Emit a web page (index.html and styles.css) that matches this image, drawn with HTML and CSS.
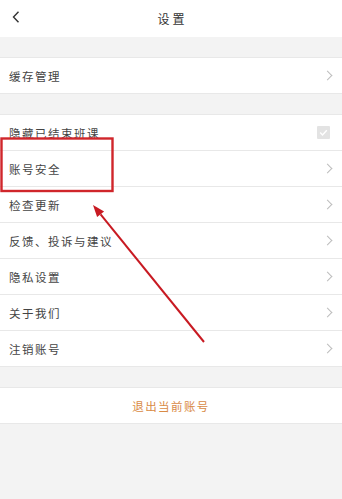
FILE: index.html
```html
<!DOCTYPE html>
<html>
<head>
    <meta charset="utf-8">
    <title>设置</title>
    <link rel="stylesheet" href="styles.css">
</head>
<body>
    <div class="page">
        <div class="header">
            <svg class="back" width="8" height="12" viewBox="0 0 8 12">
                <polyline points="6.5,0.8 1.5,6 6.5,11.2" fill="none" stroke="#333" stroke-width="1.4"/>
            </svg>
            <span class="title">设置</span>
        </div>

        <div class="group">
            <div class="row"><span>缓存管理</span><i class="arrow"></i></div>
        </div>

        <div class="group">
            <div class="row">
                <span>隐藏已结束班课</span>
                <svg class="check" width="13" height="13" viewBox="0 0 13 13">
                    <rect x="0" y="0" width="13" height="13" rx="1" fill="#e3e3e3"/>
                    <polyline points="3.2,6.6 5.5,8.9 9.8,4.2" fill="none" stroke="#fff" stroke-width="1.4"/>
                </svg>
            </div>
            <div class="row"><span>账号安全</span><i class="arrow"></i></div>
            <div class="row"><span>检查更新</span><i class="arrow"></i></div>
            <div class="row"><span>反馈、投诉与建议</span><i class="arrow"></i></div>
            <div class="row"><span>隐私设置</span><i class="arrow"></i></div>
            <div class="row"><span>关于我们</span><i class="arrow"></i></div>
            <div class="row"><span>注销账号</span><i class="arrow"></i></div>
        </div>

        <div class="group">
            <div class="row logout">退出当前账号</div>
        </div>

        <!-- 标注 -->
        <svg class="marks" width="342" height="499" viewBox="0 0 342 499">
            <rect x="1.5" y="138.5" width="111" height="52.5" fill="none" stroke="#d0262b" stroke-width="2.4"/>
            <line x1="204" y1="342" x2="100.6" y2="214.3" stroke="#c81a22" stroke-width="2"/>
            <polygon points="93,205 104.1,211.5 97.1,217.1" fill="#c81a22"/>
        </svg>
    </div>
</body>
</html>
```

FILE: styles.css
```css
body {
    margin: 0;
    background-color: #f3f3f3;
    font-family: "Noto Sans CJK SC", "Liberation Sans", sans-serif;
    color: #444;
}
.page {
    position: relative;
    min-height: 499px;
}
.header {
    height: 37px;
    background: white;
    display: flex;
    align-items: center;
    justify-content: center;
    position: relative;
}
.back {
    position: absolute;
    left: 12px;
    top: 11px;
}
.title {
    font-size: 12px;
    letter-spacing: 3px;
    margin-left: 3px;
    color: #333;
}
.group {
    margin-top: 20px;
    background: white;
    border-bottom: 1px solid #e8e8e8;
}
.row {
    height: 36px;
    box-sizing: border-box;
    border-top: 1px solid #e8e8e8;
    display: flex;
    align-items: center;
    justify-content: space-between;
    padding: 0 9px 0 9px;
    font-size: 11.5px;
    letter-spacing: 1.5px;
}
.arrow {
    width: 6px;
    height: 6px;
    border-top: 1.3px solid #bdbdbd;
    border-right: 1.3px solid #bdbdbd;
    transform: rotate(45deg);
    margin-right: 2px;
}
.check {
    margin-right: 3px;
}
.logout {
    justify-content: center;
    color: #d98a45;
    font-size: 11.5px;
    letter-spacing: 1.4px;
}
.marks {
    position: absolute;
    left: 0;
    top: 0;
    pointer-events: none;
}
```
